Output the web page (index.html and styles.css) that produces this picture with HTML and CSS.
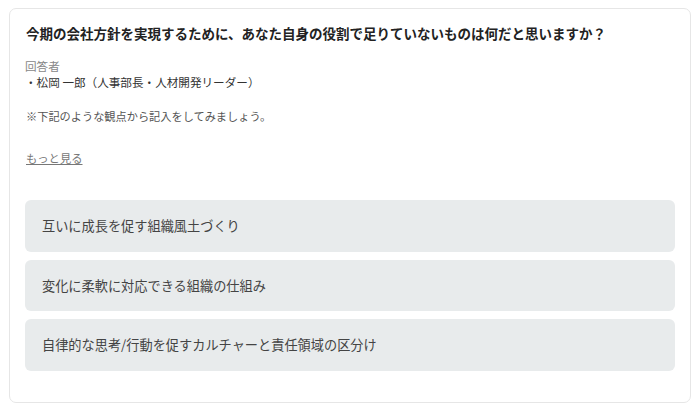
FILE: index.html
```html
<!DOCTYPE html>
<html lang="ja">
<head>
<meta charset="utf-8">
<link rel="stylesheet" href="styles.css">
</head>
<body>
<div class="card">
  <h1 class="title">今期の会社方針を実現するために、あなた自身の役割で足りていないものは何だと思いますか？</h1>
  <div class="meta">
    <div class="label">回答者</div>
    <div class="person">・松岡 一郎（人事部長・人材開発リーダー）</div>
  </div>
  <p class="note">※下記のような観点から記入をしてみましょう。</p>
  <a class="more">もっと見る</a>
  <div class="options">
    <div class="option">互いに成長を促す組織風土づくり</div>
    <div class="option">変化に柔軟に対応できる組織の仕組み</div>
    <div class="option">自律的な思考/行動を促すカルチャーと責任領域の区分け</div>
  </div>
</div>
</body>
</html>
```

FILE: styles.css
```css
* { box-sizing: border-box; }
html, body { margin: 0; padding: 0; background: #fff; }
body {
  font-family: "Noto Sans CJK JP", "Noto Sans", sans-serif;
  color: #333;
  padding: 8px 9px 0 9px;
  width: 700px;
}
.card {
  border: 1px solid #e6e6e6;
  border-radius: 7px;
  height: 395px;
  padding: 14px 15px 0 15px;
}
.title {
  margin: 0 0 0 1px;
  font-size: 13.5px;
  line-height: 20px;
  font-weight: 700;
  color: #222;
}
.meta { margin-top: 15px; font-size: 11.6px; line-height: 16px; }
.label { color: #888; }
.person { color: #333; }
.note {
  margin: 18px 0 0 1px;
  font-size: 11.2px;
  line-height: 16px;
  color: #555;
}
.more {
  display: block;
  margin: 26px 0 0 1px;
  font-size: 11.3px;
  line-height: 16px;
  color: #777;
  text-decoration: underline;
}
.options {
  margin-top: 34px;
  display: flex;
  flex-direction: column;
  gap: 8px;
}
.option {
  background: #e8ebec;
  border-radius: 6px;
  height: 51.5px;
  padding: 0 17px;
  display: flex;
  align-items: center;
  font-size: 13.2px;
  color: #444;
}
```
